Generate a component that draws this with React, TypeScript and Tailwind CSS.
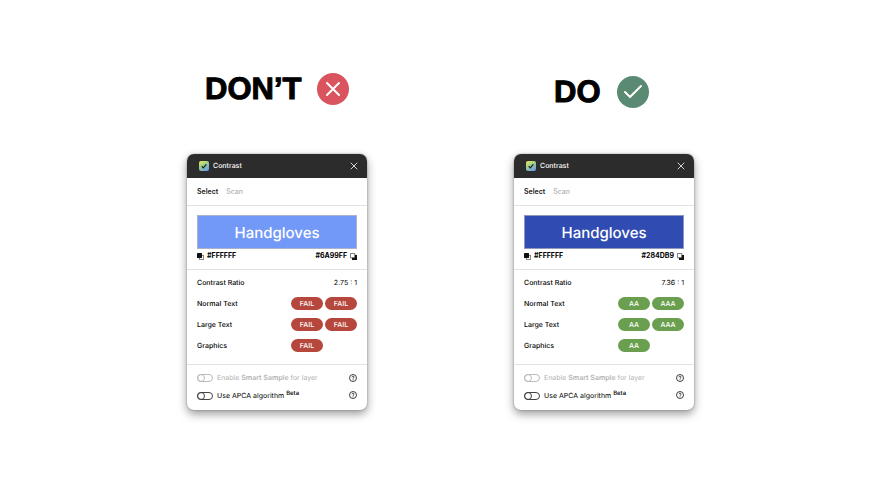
import React from 'react';
import { Check, X } from 'lucide-react';

interface Rating {
  label: string;
  grades: string[];
}

interface Example {
  id: string;
  title: string;
  good: boolean;
  background: string;
  swatch: string;
  ratio: string;
  ratings: Rating[];
}

const EXAMPLES: Example[] = [
  {
    id: 'dont',
    title: 'DON’T',
    good: false,
    background: '#6A99FF',
    swatch: 'bg-[#7298f8] border-[#a9b4cc]',
    ratio: '2.75 : 1',
    ratings: [
      { label: 'Normal Text', grades: ['FAIL', 'FAIL'] },
      { label: 'Large Text', grades: ['FAIL', 'FAIL'] },
      { label: 'Graphics', grades: ['FAIL'] },
    ],
  },
  {
    id: 'do',
    title: 'DO',
    good: true,
    background: '#284DB9',
    swatch: 'bg-[#304cb2] border-[#8d98c0]',
    ratio: '7.36 : 1',
    ratings: [
      { label: 'Normal Text', grades: ['AA', 'AAA'] },
      { label: 'Large Text', grades: ['AA', 'AAA'] },
      { label: 'Graphics', grades: ['AA'] },
    ],
  },
];

const LogoIcon = () => (
  <svg viewBox="0 0 20 20" className="size-[10px]" aria-hidden="true">
    <defs>
      <linearGradient id="logo" x1="0" y1="0" x2="0.6" y2="1">
        <stop offset="0" stopColor="#f5e556" />
        <stop offset="0.5" stopColor="#9bd08a" />
        <stop offset="1" stopColor="#6fa3e0" />
      </linearGradient>
    </defs>
    <rect width="20" height="20" rx="4" fill="url(#logo)" />
    <path d="M5.5 10.5l3.2 3.2 6-7" fill="none" stroke="#222" strokeWidth="2.6" />
  </svg>
);

const ForegroundIcon = () => (
  <svg viewBox="0 0 14 14" className="size-[7px]" aria-hidden="true">
    <path d="M10 4.8h3.2v8.4H4.8V10" fill="none" stroke="#333" strokeWidth="1.3" />
    <rect width="10" height="10" rx="1" fill="#111" />
  </svg>
);

const BackgroundIcon = () => (
  <svg viewBox="0 0 14 14" className="size-[7px]" aria-hidden="true">
    <path d="M4 4H14V14H4z" fill="#111" />
    <rect x="0.7" y="0.7" width="9" height="9" rx="1" fill="#fff" stroke="#222" strokeWidth="1.4" />
  </svg>
);

const HelpButton = ({ label }: { label: string }) => (
  <button type="button" aria-label={label} className="size-2 shrink-0">
    <svg viewBox="0 0 16 16" className="size-2" fill="none" stroke="#111">
      <circle cx="8" cy="8" r="7" strokeWidth="1.6" />
      <path d="M6 6.4a2 2 0 1 1 2.9 1.8c-.6.3-.9.6-.9 1.3" strokeWidth="1.6" />
      <path d="M8 10.8v1.6" strokeWidth="1.6" />
    </svg>
  </button>
);

const Toggle = ({ id, disabled }: { id: string; disabled?: boolean }) => (
  <input
    id={id}
    type="checkbox"
    role="switch"
    disabled={disabled}
    className="flex h-2 w-4 shrink-0 appearance-none items-center rounded-full border border-[#444] before:-ml-px before:size-2 before:shrink-0 before:rounded-full before:border before:border-[#444] disabled:border-[#bbb] disabled:before:border-[#bbb]"
  />
);

const ContrastPanel = ({ example }: { example: Example }) => (
  <section className="w-full overflow-hidden rounded-[7px] bg-white text-[7px] leading-[10px] text-black shadow-[0_4px_10px_rgba(0,0,0,0.4),0_0_2px_rgba(0,0,0,0.35)]">
    <header className="flex h-6 items-center bg-[#2c2c2c] pr-[7px] pl-3 text-white">
      <LogoIcon />
      <h3 className="ml-1 font-medium">Contrast</h3>
      <button type="button" aria-label="Close" className="ml-auto">
        <X size={12} strokeWidth={1.6} />
      </button>
    </header>

    <nav className="flex h-7 items-center gap-2 border-b border-[#e2e2e2] px-[10px]">
      <button type="button" className="font-semibold text-[#222]">Select</button>
      <button type="button" className="font-medium text-[#b3b3b3]">Scan</button>
    </nav>

    <div className="border-b border-[#e2e2e2] px-[10px] pt-[9px] pb-2">
      <div className={`flex h-[34px] items-center justify-center border pt-[2px] text-[15px] font-medium text-white ${example.swatch}`}>
        Handgloves
      </div>
      <div className="mt-[2px] flex justify-between font-bold">
        <button type="button" className="flex items-center gap-[3px]">
          <ForegroundIcon />
          #FFFFFF
        </button>
        <button type="button" className="flex items-center gap-[3px]">
          {example.background}
          <BackgroundIcon />
        </button>
      </div>
    </div>

    <dl className="border-b border-[#e2e2e2] px-[10px] pt-[2px] pb-2">
      <div className="flex h-[21px] items-center justify-between">
        <dt className="font-medium">Contrast Ratio</dt>
        <dd>{example.ratio}</dd>
      </div>
      {example.ratings.map((rating) => (
        <div key={rating.label} className="flex h-[21px] items-center justify-between">
          <dt className="font-medium">{rating.label}</dt>
          <dd className="grid grid-cols-[32px_32px] gap-[2px]">
            {rating.grades.map((grade, i) => (
              <span
                key={i}
                className={`flex h-[13px] items-center justify-center rounded-full font-medium text-white ${example.good ? 'bg-[#6a9f50]' : 'bg-[#b5473c]'}`}
              >
                {grade}
              </span>
            ))}
          </dd>
        </div>
      ))}
    </dl>

    <div className="flex flex-col gap-2 px-[10px] pt-2 pb-[9px]">
      <div className="flex items-center">
        <Toggle id={`${example.id}-sample`} disabled />
        <label htmlFor={`${example.id}-sample`} className="ml-1 flex-1 text-[#b3b3b3]">
          Enable <b className="font-semibold">Smart Sample</b> for layer
        </label>
        <HelpButton label="About Smart Sample" />
      </div>
      <div className="flex items-start">
        <div className="flex flex-1 items-center">
          <Toggle id={`${example.id}-apca`} />
          <label htmlFor={`${example.id}-apca`} className="ml-1">
            Use APCA algorithm <sup className="text-[6px] font-medium">Beta</sup>
          </label>
        </div>
        <HelpButton label="About APCA" />
      </div>
    </div>
  </section>
);

const App: React.FC = () => (
  <main className="flex min-h-screen justify-center gap-[147px] bg-white pl-[11px] font-[Inter,sans-serif] [text-rendering:geometricPrecision]">
    {EXAMPLES.map((example) => (
      <article key={example.id} className="flex w-[180px] flex-col pt-[73px]">
        <div className={`flex h-[81px] items-start gap-4 ${example.good ? 'pt-[3px] pl-10' : 'pl-[18px]'}`}>
          <h2 className="font-['Liberation_Sans',Arial,sans-serif] text-[31px] leading-8 font-bold text-black [-webkit-text-stroke:1px_black]">{example.title}</h2>
          <span className={`flex size-8 shrink-0 items-center justify-center rounded-full text-white ${example.good ? 'bg-[#5a8a72]' : 'bg-[#d9545f]'}`}>
            {example.good ? <Check size={24} strokeWidth={2} /> : <X size={24} strokeWidth={2} />}
          </span>
        </div>
        <ContrastPanel example={example} />
      </article>
    ))}
  </main>
);

export default App;
